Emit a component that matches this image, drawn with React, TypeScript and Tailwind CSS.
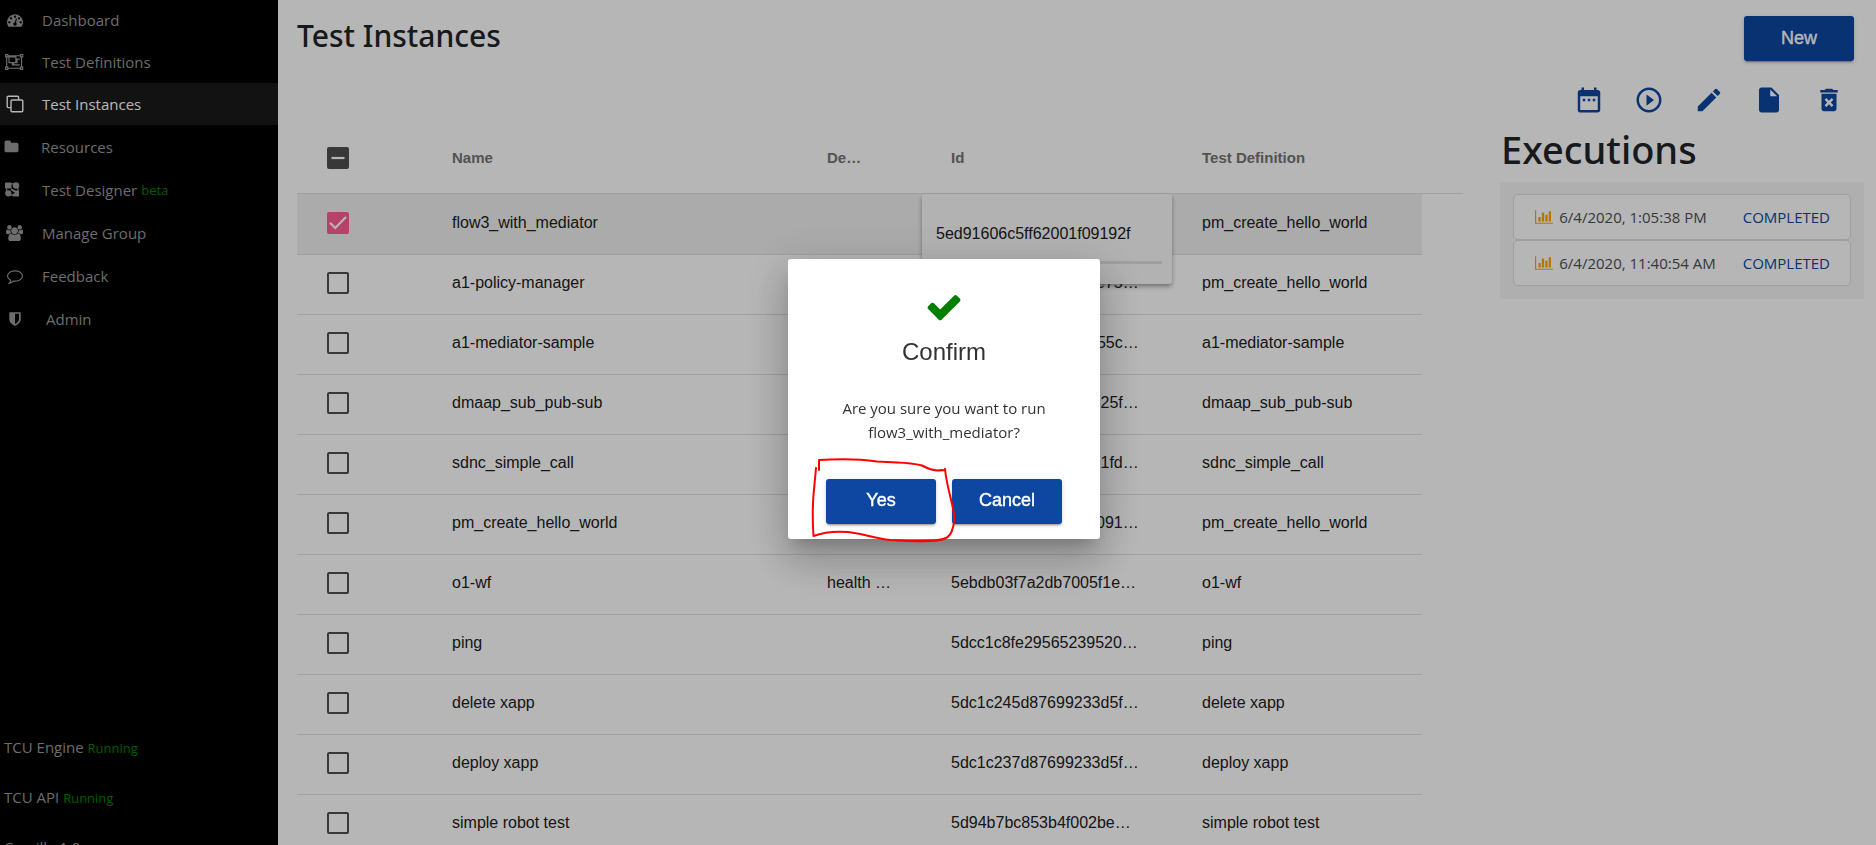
import React from "react";
import { MdDateRange, MdPlayCircleOutline, MdEdit, MdInsertDriveFile, MdDeleteForever } from "react-icons/md";

function Glyph({ d, w = 1792, size = 16, className = "" }: { d: string; w?: number; size?: number; className?: string }) {
  return (
    <svg viewBox={`0 0 ${w} 1792`} width={(w / 1792) * size} height={size} fill="currentColor" className={className} aria-hidden="true">
      <path d={d} />
    </svg>
  );
}

const GAUGE =
  "M384 1152q0-53-37.5-90.5t-90.5-37.5-90.5 37.5-37.5 90.5 37.5 90.5 90.5 37.5 90.5-37.5 37.5-90.5zm192-448q0-53-37.5-90.5t-90.5-37.5-90.5 37.5-37.5 90.5 37.5 90.5 90.5 37.5 90.5-37.5 37.5-90.5zm428 481l101-382q6-26-7.5-48.5t-38.5-29.5-48 6.5-30 39.5l-101 382q-60 5-107 43.5t-63 98.5q-20 77 20 146t117 89 146-20 89-117q16-60-6-117t-72-91zm660-33q0-53-37.5-90.5t-90.5-37.5-90.5 37.5-37.5 90.5 37.5 90.5 90.5 37.5 90.5-37.5 37.5-90.5zm-640-640q0-53-37.5-90.5t-90.5-37.5-90.5 37.5-37.5 90.5 37.5 90.5 90.5 37.5 90.5-37.5 37.5-90.5zm448 192q0-53-37.5-90.5t-90.5-37.5-90.5 37.5-37.5 90.5 37.5 90.5 90.5 37.5 90.5-37.5 37.5-90.5zm320 448q0 261-141 483-19 29-54 29h-1402q-35 0-54-29-141-221-141-483 0-182 71-348t191-286 286-191 348-71 348 71 286 191 191 286 71 348z";
const GROUP =
  "M2048 384h-128v1024h128v384h-384v-128h-1280v128h-384v-384h128v-1024h-128v-384h384v128h1280v-128h384v384zm-256-256v128h128v-128h-128zm-1664 0v128h128v-128h-128zm128 1536v-128h-128v128h128zm1408-128v-128h128v-1024h-128v-128h-1280v128h-128v1024h128v128h1280zm256 128v-128h-128v128h128zm-640-1152h384v768h-896v-256h-384v-768h896v256zm-768 384h640v-512h-640v512zm1152 256v-512h-256v384h-384v128h640z";
const USERS =
  "M593 896q-162 5-265 128h-134q-82 0-138-40.5t-56-118.5q0-353 124-353 6 0 43.5 21t97.5 42.5 119 21.5q67 0 133-23-5 37-5 66 0 139 81 256zm1071 637q0 120-73 189.5t-194 69.5h-874q-121 0-194-69.5t-73-189.5q0-53 3.5-103.5t14-109 26.5-108.5 43-97.5 62-81 85.5-53.5 111.5-20q10 0 43 21.5t73 48 107 48 135 21.5 135-21.5 107-48 73-48 43-21.5q61 0 111.5 20t85.5 53.5 62 81 43 97.5 26.5 108.5 14 109 3.5 103.5zm-1024-1277q0 106-75 181t-181 75-181-75-75-181 75-181 181-75 181 75 75 181zm704 384q0 159-112.5 271.5t-271.5 112.5-271.5-112.5-112.5-271.5 112.5-271.5 271.5-112.5 271.5 112.5 112.5 271.5zm576 225q0 78-56 118.5t-138 40.5h-134q-103-123-265-128 81-117 81-256 0-29-5-66 66 23 133 23 59 0 119-21.5t97.5-42.5 43.5-21q124 0 124 353zm-128-609q0 106-75 181t-181 75-181-75-75-181 75-181 181-75 181 75 75 181z";
const COMMENT =
  "M896 384q-204 0-381.5 69.5t-282 187.5-104.5 255q0 112 71.5 213.5t201.5 175.5l87 50-27 96q-24 91-70 172 152-63 275-171l43-38 57 6q69 8 130 8 204 0 381.5-69.5t282-187.5 104.5-255-104.5-255-282-187.5-381.5-69.5zm896 512q0 174-120 321.5t-326 233-450 85.5q-70 0-145-8-198 175-460 242-49 14-114 22h-5q-15 0-27-10.5t-16-27.5v-1q-3-4-.5-12t2-10 4.5-9.5l6-9 7-8.5 8-9q7-8 31-34.5t34.5-38 31-39.5 32.5-51 27-59 26-76q-157-89-247.5-220t-90.5-281q0-174 120-321.5t326-233 450-85.5 450 85.5 326 233 120 321.5z";
const SHIELD =
  "M1344 960v-640h-448v1137q119-63 213-137 235-184 235-360zm192-768v768q0 86-33.5 170.5t-83 150-118 127.5-126.5 103-121 77.5-89.5 49.5-42.5 20q-12 6-26 6t-26-6q-16-7-42.5-20t-89.5-49.5-121-77.5-126.5-103-118-127.5-83-150-33.5-170.5v-768q0-26 19-45t45-19h1152q26 0 45 19t19 45z";
const FOLDER =
  "M1728 608v704q0 92-66 158t-158 66h-1216q-92 0-158-66t-66-158v-960q0-92 66-158t158-66h320q92 0 158 66t66 158v32h672q92 0 158 66t66 158z";
const CHECK =
  "M1671 566q0 40-28 68l-724 724-136 136q-28 28-68 28t-68-28l-136-136-362-362q-28-28-28-68t28-68l136-136q28-28 68-28t68 28l294 295 656-657q28-28 68-28t68 28l136 136q28 28 28 68z";
const CHART =
  "M640 896v512h-256v-512h256zm384-512v1024h-256v-1024h256zm1024 1152v128h-2048v-1536h128v1408h1920zm-640-896v768h-256v-768h256zm384-384v1152h-256v-1152h256z";

const cloneIcon = (
  <svg width="18" height="18" viewBox="0 0 18 18" fill="none" stroke="currentColor" strokeWidth="1.4" aria-hidden="true">
    <rect x="5" y="5" width="11.8" height="11.8" rx="1" />
    <path d="M5 12.6H2.2a1 1 0 0 1-1-1V2.2a1 1 0 0 1 1-1h9.4a1 1 0 0 1 1 1V5" />
  </svg>
);

const designerIcon = (
  <svg width="15" height="15" viewBox="0 0 15 15" fill="currentColor" aria-hidden="true">
    <rect x="0" y="0.500" width="6.500" height="6" rx="0.500" />
    <circle cx="11" cy="3.500" r="3.200" />
    <circle cx="3.300" cy="11.300" r="3.100" />
    <path d="M7.500 14.500v-2.200l2.500-1.600L6 8.200V6.500l3.200 1.300 1.500.7H14v6z" />
    <path d="M6 1.200h3v1.200H6zM1 6.200h1.200v3H1zM12.300 6h1.200v3h-1.200zM5 12.500h3v1.200H5z" />
  </svg>
);

const navItems = [
  { label: "Dashboard", icon: <Glyph d={GAUGE} />, cls: "h-10 text-[#999]", box: "w-[21px] mr-[17px]" },
  { label: "Test Definitions", icon: <Glyph d={GROUP} w={2048} />, cls: "h-[43px] text-[#999]", box: "w-[21px] mr-[17px]" },
  { label: "Test Instances", icon: cloneIcon, cls: "h-[42px] bg-[#1a1a1a] text-white", box: "w-[21px] mr-[17px]" },
  { label: "Resources", icon: <Glyph d={FOLDER} />, cls: "h-[43px] text-[#999]", box: "w-[15px] mr-[22px]" },
  { label: "Test Designer", tag: "beta", icon: designerIcon, cls: "h-[43px] text-[#999]", box: "w-[17px] mr-[21px]" },
  { label: "Manage Group", icon: <Glyph d={USERS} w={1920} />, cls: "h-[43px] text-[#999]", box: "w-[21px] mr-[17px]" },
  { label: "Feedback", icon: <Glyph d={COMMENT} />, cls: "h-[43px] text-[#999]", box: "w-[21px] mr-[17px]" },
  { label: "Admin", icon: <Glyph d={SHIELD} />, cls: "h-[43px] text-[#999]", box: "w-[21px] mr-[21px]" },
];

const rows = [
  { name: "flow3_with_mediator", desc: "", id: "5ed91606c5ff62001f09192f", def: "pm_create_hello_world", selected: true },
  { name: "a1-policy-manager", desc: "", id: "5ed8c49a71c5f6200e7501b2", def: "pm_create_hello_world" },
  { name: "a1-mediator-sample", desc: "", id: "5ed7f31c6029be44855c08d1", def: "a1-mediator-sample" },
  { name: "dmaap_sub_pub-sub", desc: "", id: "5ec60b1c9a73e802425f7a90", def: "dmaap_sub_pub-sub" },
  { name: "sdnc_simple_call", desc: "", id: "5ebc4ec067a2db8301fd62e4", def: "sdnc_simple_call" },
  { name: "pm_create_hello_world", desc: "", id: "5ec5f162ca3e4b7d80912b3d", def: "pm_create_hello_world" },
  { name: "o1-wf", desc: "health check", id: "5ebdb03f7a2db7005f1e9a02", def: "o1-wf" },
  { name: "ping", desc: "", id: "5dcc1c8fe29565239520a1d7", def: "ping" },
  { name: "delete xapp", desc: "", id: "5dc1c245d87699233d5f80b6", def: "delete xapp" },
  { name: "deploy xapp", desc: "", id: "5dc1c237d87699233d5f80b5", def: "deploy xapp" },
  { name: "simple robot test", desc: "", id: "5d94b7bc853b4f002be70a13", def: "simple robot test" },
];

const executions = [
  { time: "6/4/2020, 1:05:38 PM", status: "COMPLETED" },
  { time: "6/4/2020, 11:40:54 AM", status: "COMPLETED" },
];

const actions = [
  { label: "Schedule", Icon: MdDateRange },
  { label: "Run", Icon: MdPlayCircleOutline },
  { label: "Edit", Icon: MdEdit },
  { label: "Clone", Icon: MdInsertDriveFile },
  { label: "Delete", Icon: MdDeleteForever },
];

function Tick({ label, state = "off" }: { label: string; state?: "off" | "on" | "mixed" }) {
  const look =
    state === "on" ? "border-[#ff5c93] bg-[#ff5c93]" : state === "mixed" ? "border-[#4f4f4f] bg-[#4f4f4f]" : "border-[#4f4f4f] bg-transparent";
  return (
    <label className="relative ml-[30px] block size-[22px]">
      <input type="checkbox" aria-label={label} defaultChecked={state === "on"} className={`block size-[22px] appearance-none rounded-[2px] border-2 ${look}`} />
      {state !== "off" && (
        <svg viewBox="0 0 22 22" className="pointer-events-none absolute inset-0 size-[22px]" fill="none" stroke="#fff" strokeWidth="2.2" aria-hidden="true">
          <path d={state === "on" ? "M3 10.800l5.200 5.200L19 5" : "M4.500 11h13"} />
        </svg>
      )}
    </label>
  );
}

function RaisedButton({ children }: { children: React.ReactNode }) {
  return (
    <button
      type="button"
      className="h-[45px] w-[110px] rounded-[3px] bg-[#0d47a1] pb-0.5 font-['Liberation_Sans',Arial,sans-serif] text-lg leading-6 text-white [-webkit-text-stroke:0.4px_white] shadow-[0_3px_1px_-2px_rgba(0,0,0,0.2),0_2px_2px_0_rgba(0,0,0,0.14),0_1px_5px_0_rgba(0,0,0,0.12)]"
    >
      {children}
    </button>
  );
}

export default function App() {
  return (
    <div className="flex h-screen overflow-hidden bg-white font-['Open_Sans','Noto_Sans',sans-serif] text-[15px] leading-6 text-[#212529]">
      <aside className="flex w-[278px] shrink-0 flex-col bg-black text-[#999]">
        <nav className="flex flex-col">
          {navItems.map((n) => (
            <a key={n.label} href="#" className={`flex items-center pl-1 ${n.cls}`}>
              <span className={`flex shrink-0 justify-center ${n.box}`}>{n.icon}</span>
              {n.label}
              {n.tag && <small className="ml-1 text-[13px] text-[green]">{n.tag}</small>}
            </a>
          ))}
        </nav>
        <div className="mt-auto -mb-[14px] flex flex-col gap-[25px] pl-1">
          <p>
            TCU Engine <small className="text-[13px] text-[green]">Running</small>
          </p>
          <p>
            TCU API <small className="text-[13px] text-[green]">Running</small>
          </p>
          <p>Camille 1.0</p>
        </div>
      </aside>

      <main className="flex min-w-0 flex-1 flex-col pl-[19px]">
        <header className="flex items-start justify-between pt-4 pr-[22px]">
          <h1 className="font-['Noto_Sans',sans-serif] text-[30px] leading-10 font-medium">Test Instances</h1>
          <RaisedButton>New</RaisedButton>
        </header>

        <div className="mt-6 flex justify-end gap-[30px] pr-8 text-[#0d47a1]">
          {actions.map(({ label, Icon }) => (
            <button key={label} type="button" aria-label={label} className="size-[30px]">
              <Icon size={30} />
            </button>
          ))}
        </div>

        <div className="flex min-h-0 flex-1 items-start">
          <section className="mt-2 min-w-0 flex-1 font-['Liberation_Sans',Arial,sans-serif] text-base leading-6 text-[#212121]">
            <table className="w-full table-fixed border-collapse text-left">
              <colgroup>
                <col className="w-[139px]" />
                <col />
                <col className="w-[124px]" />
                <col className="w-[251px]" />
                <col className="w-[236px]" />
                <col className="w-[41px]" />
              </colgroup>
              <thead className="text-[15px] text-[#757575]">
                <tr className="h-[70px] border-b border-[#e0e0e0]">
                  <th>
                    <Tick label="Select all" state="mixed" />
                  </th>
                  <th className="pl-4">Name</th>
                  <th className="pl-4">
                    <span className="block w-10 truncate">Description</span>
                  </th>
                  <th className="pl-4">Id</th>
                  <th className="pl-4">Test Definition</th>
                  <th />
                </tr>
              </thead>
              <tbody>
                {rows.map((r) => {
                  const cell = r.selected ? "border-b border-[#e0e0e0] bg-[#f0f0f0] pb-0.5" : "border-b border-[#e0e0e0] pb-0.5";
                  return (
                    <tr key={r.name} className={r.selected ? "h-[61px]" : "h-[60px]"}>
                      <td className={cell}>
                        <Tick label={r.name} state={r.selected ? "on" : "off"} />
                      </td>
                      <td className={`truncate pl-4 ${cell}`}>{r.name}</td>
                      <td className={`pr-[42px] pl-4 ${cell}`}>
                        <span className="block truncate">{r.desc}</span>
                      </td>
                      <td className={`relative pr-[47px] pl-4 ${cell}`}>
                        <span className="block truncate">{r.selected ? "" : r.id}</span>
                        {r.selected && (
                          <div className="absolute top-0 -left-[13px] z-10 flex h-[90px] w-[250px] flex-col rounded-[3px] bg-[#fafafa] px-[10px] pt-7 pb-5 shadow-[0_2px_4px_-1px_rgba(0,0,0,0.3),0_3px_5px_0_rgba(0,0,0,0.2)]">
                            <span className="pl-1">{r.id}</span>
                            <span className="mt-auto h-[3px] bg-[#e0e0e0]" />
                          </div>
                        )}
                      </td>
                      <td className={`truncate pl-4 ${cell}`}>{r.def}</td>
                      <td />
                    </tr>
                  );
                })}
              </tbody>
            </table>
          </section>

          <section className="mr-3 ml-[37px] w-[364px] shrink-0 pt-[6px]">
            <h2 className="pl-px font-['Noto_Sans',sans-serif] text-[38px] leading-[56px] font-medium">Executions</h2>
            <ul className="mt-[5px] bg-[#f5f5f5] px-[13px] pt-3 pb-[13px]">
              {executions.map((e) => (
                <li key={e.time} className="flex h-[46px] items-center rounded-[5px] border border-[#dfdfdf] bg-white pr-5 pl-[21px] text-[#495057]">
                  <Glyph d={CHART} w={2048} className="mr-[6px] text-[orange]" />
                  {e.time}
                  <a href="#" className="ml-auto text-[#0d47a1]">
                    {e.status}
                  </a>
                </li>
              ))}
            </ul>
          </section>
        </div>
      </main>

      <div className="fixed inset-0 z-20 flex items-center justify-center bg-black/[.288] pb-12 pl-3">
        <div
          role="dialog"
          aria-label="Confirm"
          className="relative flex w-[312px] flex-col items-center rounded-[3px] bg-white pt-[29px] pb-[15px] text-center shadow-[0_11px_15px_-7px_rgba(0,0,0,0.2),0_24px_38px_3px_rgba(0,0,0,0.14),0_9px_46px_8px_rgba(0,0,0,0.12)]"
        >
          <Glyph d={CHECK} size={38} className="text-[green]" />
          <h2 className="mt-[10px] font-['Liberation_Sans',Arial,sans-serif] text-2xl leading-8 text-[#333]">Confirm</h2>
          <p className="mt-7 px-10 text-[#333]">
            Are you sure you want to run flow3_with_mediator?
          </p>
          <div className="mt-[35px] flex gap-4">
            <RaisedButton>Yes</RaisedButton>
            <RaisedButton>Cancel</RaisedButton>
          </div>
          <svg viewBox="0 0 160 90" className="pointer-events-none absolute top-[196px] left-5 h-[90px] w-[160px]" fill="none" stroke="red" strokeWidth="2" strokeLinejoin="round" strokeLinecap="round" aria-hidden="true">
            <path d="M11 15V5Q45 3 69 6.500L89 7.500Q104 8 114 10.500Q126 17 134 15Q138 16 137 14C139 34 145 48 146 60C147 74 142 81 138 83C128 88 100 86 82 85C66 83 52 78 40 77C28 76 16 77 5.500 81Q4 60 5.500 40L8 13" />
          </svg>
        </div>
      </div>
    </div>
  );
}
